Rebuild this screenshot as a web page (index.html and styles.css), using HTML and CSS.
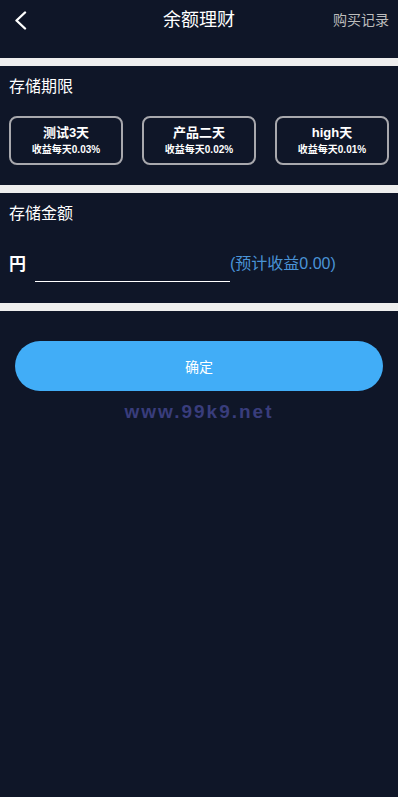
FILE: index.html
```html
<!DOCTYPE html>
<html lang="zh">
<head>
<meta charset="utf-8">
<meta name="viewport" content="width=device-width, initial-scale=1">
<title>余额理财</title>
<link rel="stylesheet" href="styles.css">
</head>
<body>
<div class="page">
  <header class="header">
    <div class="header-row">
      <a class="back" href="#" aria-label="返回">
        <svg width="14" height="20" viewBox="0 0 14 20"><polyline points="11,2.5 2.5,10.5 11,18.5" fill="none" stroke="#ffffff" stroke-width="2.4" stroke-linecap="round" stroke-linejoin="round"/></svg>
      </a>
      <h1 class="title">余额理财</h1>
      <a class="record" href="#">购买记录</a>
    </div>
  </header>
  <div class="divider"></div>
  <section class="section">
    <div class="section-title">存储期限</div>
    <div class="cards">
      <div class="card">
        <div class="card-name">测试3天</div>
        <div class="card-rate">收益每天0.03%</div>
      </div>
      <div class="card">
        <div class="card-name">产品二天</div>
        <div class="card-rate">收益每天0.02%</div>
      </div>
      <div class="card">
        <div class="card-name">high天</div>
        <div class="card-rate">收益每天0.01%</div>
      </div>
    </div>
  </section>
  <div class="divider"></div>
  <section class="section section-amount">
    <div class="section-title">存储金额</div>
    <div class="amount-row">
      <span class="currency">円</span>
      <input class="amount-input" type="text" aria-label="金额">
      <span class="estimate">(预计收益0.00)</span>
    </div>
  </section>
  <div class="divider"></div>
  <div class="actions">
    <button class="confirm" type="button">确定</button>
    <div class="watermark">www.99k9.net</div>
  </div>
</div>
</body>
</html>
```
FILE: styles.css
```css
html, body {
  margin: 0;
  padding: 0;
  background: #0f1628;
}
body {
  font-family: "Liberation Sans", Arial, "Noto Sans CJK SC", sans-serif;
  color: #ffffff;
  min-height: 797px;
}
.page {
  display: flex;
  flex-direction: column;
}
.header {
  height: 58px;
}
.header-row {
  height: 40px;
  display: flex;
  align-items: center;
  justify-content: space-between;
  padding: 0 9px 0 14px;
  position: relative;
}
.back {
  display: flex;
  align-items: center;
  width: 20px;
  height: 40px;
}
.title {
  position: absolute;
  left: 0;
  right: 0;
  margin: 0;
  text-align: center;
  font-size: 18px;
  font-weight: normal;
  line-height: 40px;
  pointer-events: none;
}
.record {
  color: #bdbdbd;
  font-size: 14px;
  text-decoration: none;
  line-height: 40px;
}
.divider {
  height: 8px;
  background: #eeeeee;
}
.section {
  padding: 10px 0 20px;
}
.section-amount {
  padding-bottom: 21px;
}
.section-title {
  font-size: 16px;
  line-height: 22px;
  padding-left: 9px;
}
.cards {
  display: flex;
  justify-content: space-between;
  padding: 0 9px;
  margin-top: 18px;
}
.card {
  width: 114px;
  height: 49px;
  box-sizing: border-box;
  border: 2px solid #a8a8ad;
  border-radius: 8px;
  display: flex;
  flex-direction: column;
  align-items: center;
  justify-content: center;
  gap: 3px;
}
.card-name {
  font-size: 13px;
  font-weight: bold;
  line-height: 16px;
}
.card-rate {
  font-size: 10px;
  font-weight: bold;
  line-height: 12px;
}
.amount-row {
  display: flex;
  align-items: center;
  padding-left: 9px;
  margin-top: 17px;
}
.currency {
  font-size: 17px;
  font-weight: bold;
}
.amount-input {
  width: 195px;
  height: 40px;
  box-sizing: border-box;
  margin-left: 9px;
  background: transparent;
  border: none;
  border-bottom: 1px solid #ffffff;
  outline: none;
  color: #ffffff;
  font-size: 16px;
  padding: 0;
}
.estimate {
  color: #4a93d6;
  font-size: 16px;
}
.actions {
  display: flex;
  flex-direction: column;
  align-items: stretch;
  padding: 30px 15px 0;
}
.confirm {
  height: 50px;
  border: none;
  border-radius: 25px;
  background: #41adf7;
  color: #ffffff;
  font-family: "Liberation Sans", Arial, "Noto Sans CJK SC", sans-serif;
  font-size: 14px;
}
.watermark {
  margin-top: 10px;
  text-align: center;
  font-size: 19px;
  font-weight: bold;
  letter-spacing: 2px;
  color: #393d7c;
  line-height: 22px;
}
```
